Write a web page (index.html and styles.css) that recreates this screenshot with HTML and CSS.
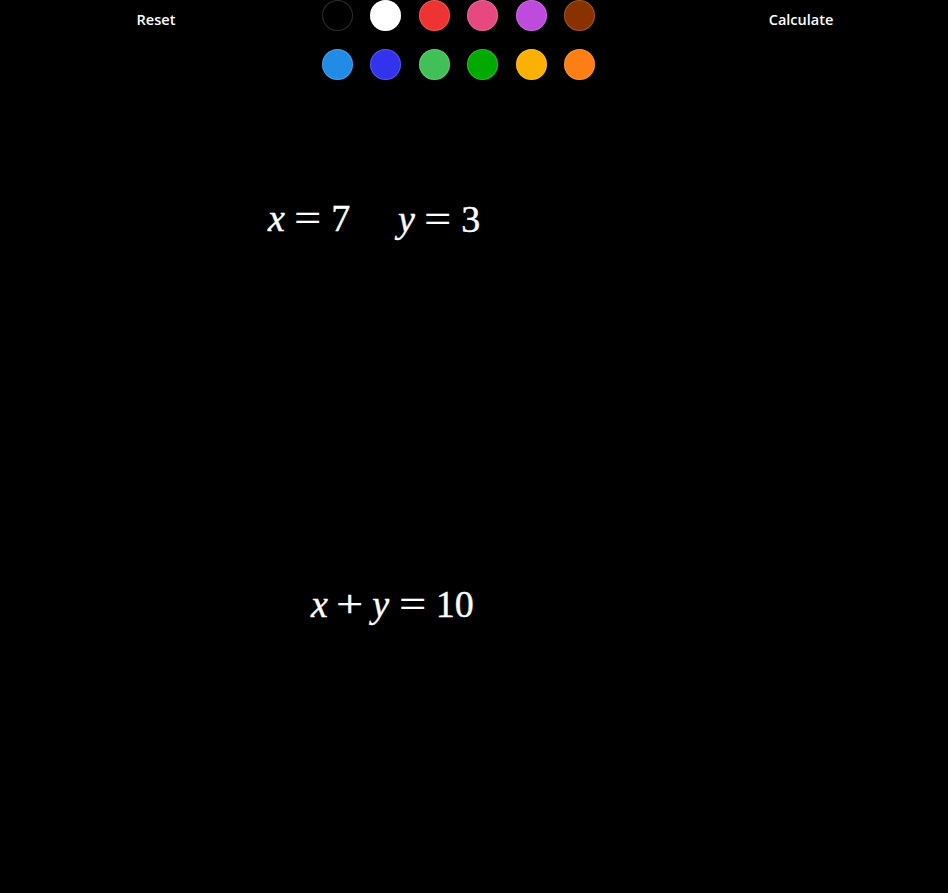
FILE: index.html
```html
<!DOCTYPE html>
<html lang="en">
<head>
<meta charset="utf-8">
<title>Calculator</title>
<link rel="stylesheet" href="styles.css">
</head>
<body>
<div class="board">
  <header class="toolbar">
    <div class="slot slot-left"><button class="btn">Reset</button></div>
    <div class="swatches">
      <span class="swatch" style="background:#000000"></span>
      <span class="swatch" style="background:#ffffff"></span>
      <span class="swatch" style="background:#ee3333"></span>
      <span class="swatch" style="background:#e64980"></span>
      <span class="swatch" style="background:#be4bdb"></span>
      <span class="swatch" style="background:#893200"></span>
      <span class="swatch" style="background:#228be6"></span>
      <span class="swatch" style="background:#3333ee"></span>
      <span class="swatch" style="background:#40c057"></span>
      <span class="swatch" style="background:#00aa00"></span>
      <span class="swatch" style="background:#fab005"></span>
      <span class="swatch" style="background:#fd7e14"></span>
    </div>
    <div class="slot slot-right"><button class="btn">Calculate</button></div>
  </header>
  <div class="expr" style="left:268px;top:196px"><i>x</i><span class="op rel">=</span>7</div>
  <div class="expr" style="left:398px;top:197px"><i>y</i><span class="op rel">=</span>3</div>
  <div class="expr" style="left:311px;top:582px"><i>x</i><span class="op bin">+</span><i>y</i><span class="op rel">=</span>10</div>
</div>
</body>
</html>
```
FILE: styles.css
```css
html, body {
  margin: 0;
  padding: 0;
  background: #000;
  height: 100%;
}
.board {
  position: relative;
  width: 948px;
  height: 893px;
  background: #000;
  overflow: hidden;
}
.toolbar {
  display: flex;
  align-items: flex-start;
}
.slot {
  display: flex;
  justify-content: center;
  height: 40px;
  align-items: center;
}
.slot-left { width: 312px; }
.slot-right { width: 294px; margin-left: auto; }
.btn {
  background: transparent;
  border: 0;
  padding: 0;
  color: #fff;
  font-family: "Open Sans", "Noto Sans", sans-serif;
  font-weight: 600;
  font-size: 14.5px;
  line-height: 20px;
  cursor: pointer;
}
.swatches {
  margin-left: 10px;
  display: grid;
  grid-template-columns: repeat(6, 31px);
  column-gap: 17.4px;
  row-gap: 18px;
}
.swatch {
  display: block;
  width: 31px;
  height: 31px;
  border-radius: 50%;
  box-shadow: inset 0 0 0 1px rgba(255,255,255,0.18);
}
.expr {
  position: absolute;
  color: #fff;
  font-family: "Liberation Serif", "DejaVu Serif", serif;
  font-size: 38px;
  white-space: nowrap;
  line-height: 1.2;
  -webkit-text-stroke: 0.4px #fff;
}
.expr i { font-style: italic; }
.op {
  display: inline-block;
  transform: scaleX(1.25);
}
.rel { margin: 0 12.5px; }
.bin { margin: 0 11.5px; }
```
